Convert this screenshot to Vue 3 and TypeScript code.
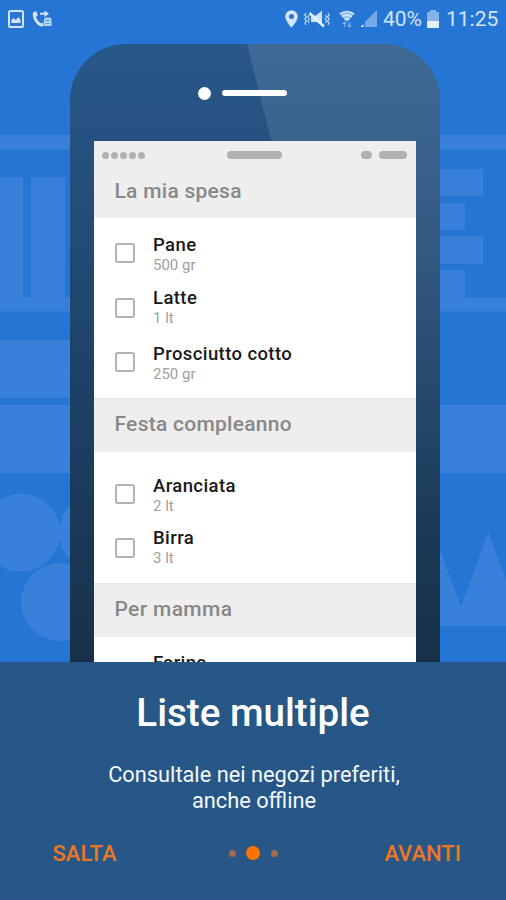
<script setup lang="ts">
interface Item {
  name: string
  amount?: string
  compact?: boolean
}

interface ShoppingList {
  title: string
  slug: string
  items: Item[]
}

const lists: ShoppingList[] = [
  {
    title: 'La mia spesa',
    slug: 'first',
    items: [
      { name: 'Pane', amount: '500 gr' },
      { name: 'Latte', amount: '1 lt', compact: true },
      { name: 'Prosciutto cotto', amount: '250 gr' },
    ],
  },
  {
    title: 'Festa compleanno',
    slug: 'second',
    items: [
      { name: 'Aranciata', amount: '2 lt' },
      { name: 'Birra', amount: '3 lt', compact: true },
    ],
  },
  {
    title: 'Per mamma',
    slug: 'third',
    items: [{ name: 'Farina' }],
  },
]
</script>

<template>
  <main class="app">
    <section class="hero">
      <svg class="backdrop" viewBox="0 0 506 662" aria-hidden="true">
        <g fill="#3880d9">
          <path d="M0 135h506v14.500H0z" />
          <path d="M0 177h23v120h8V177h34v120h5v14.500H0z" />
          <path d="M440 169h43.500v27H440zM440 203h25v27h-25zM440 236h43.500v28H440zM440 270h25v27.500h41v14h-66z" />
          <path d="M0 340h70v58H0zM0 405h506v68H0z" />
          <circle cx="21" cy="532.500" r="39" />
          <circle cx="98" cy="532.500" r="39" />
          <circle cx="60" cy="602" r="39" />
          <path d="M440 550l21 57 27.500-75L506 581v45h-66z" />
        </g>
      </svg>

      <header class="status">
        <div class="status-group">
          <svg class="ic-picture" width="16" height="18" viewBox="0 0 16 18">
            <rect x="1" y="1" width="14" height="16" rx="1.500" fill="none" stroke="#d3e4f9" stroke-width="2" />
            <path d="M3.500 13V10l2-2 2 2 3-3 2 3v3z" fill="#d3e4f9" />
          </svg>
          <svg class="ic-call" width="20" height="18" viewBox="0 0 20 18">
            <path d="M1 2.500L4 1l2 4-2 2c1 3 2.500 4.800 5.500 6.500l1.500-1v4C6 17.500-.5 9 1 2.500z" fill="#d3e4f9" />
            <path d="M8 3.700h6" stroke="#d3e4f9" stroke-width="2" />
            <path d="M12.500.5L17 3.700 12.500 7z" fill="#d3e4f9" />
            <path d="M12 9l1.500-1.500h5L19.500 9v7h-8z" fill="#b5d1f3" />
            <path d="M13.500 10.500h4M13.500 13.500h4" stroke="#5c98e0" stroke-width="1" />
          </svg>
        </div>
        <div class="status-group">
          <svg class="ic-pin" width="13" height="18" viewBox="0 0 13 18">
            <path fill-rule="evenodd" d="M6.500.3A6.200 6.200 0 0 0 .3 6.500C.3 11 6.500 17.700 6.500 17.700S12.700 11 12.700 6.500A6.200 6.200 0 0 0 6.500.3zm0 3.700a2.500 2.500 0 1 1 0 5 2.500 2.500 0 0 1 0-5z" fill="#d3e4f9" />
          </svg>
          <svg class="ic-mute" width="26" height="18" viewBox="0 0 26 18">
            <path d="M2 3L.8 5 2.500 7 .8 9l1.700 2-1.700 2L2 15M5 5L4 7l1.300 2L4 11l1 2M24 3l1.200 2-1.700 2 1.700 2-1.700 2 1.700 2-1.200 2M21.500 5l1 2-1.300 2 1.300 2-1 2" fill="none" stroke="#b9d3f4" stroke-width="1.200" />
            <path d="M7 5.500h5l6-5v15.500l-5-4H7z" fill="#cfe1f8" />
            <path d="M5.500 3l14.500 13.500" stroke="#e4effc" stroke-width="2.400" />
          </svg>
          <svg class="ic-wifi" width="16" height="18" viewBox="0 0 16 18">
            <path d="M1 4Q8-1.500 15 4L8 12z" fill="#8fb9ec" />
            <path d="M1 4Q8-1 15 4M3 6.800q5-3.500 10 0M5.500 9.500q2.500-1.700 5 0" fill="none" stroke="#d3e4f9" stroke-width="1.700" />
            <path d="M5.500 17v-5M3.800 14l1.700-2 1.700 2M10.500 12v5M8.800 15l1.700 2 1.700-2" fill="none" stroke="#76a9e8" stroke-width="1.300" />
          </svg>
          <svg class="ic-signal" width="18" height="17" viewBox="0 0 18 17">
            <path d="M17 0v17H5V12z" fill="#76a9e8" />
            <path d="M.5 17l3-3v3z" fill="#e4effc" />
          </svg>
          <span class="percent">40%</span>
          <svg class="ic-battery" width="12" height="18" viewBox="0 0 12 18">
            <path d="M3 0h6v2h3v16H0V2h3z" fill="#84b2eb" />
            <path d="M0 11h12v7H0z" fill="#e4effc" />
          </svg>
          <span class="clock">11:25</span>
        </div>
      </header>

      <div class="phone">
        <svg class="shine" viewBox="0 0 370 618" aria-hidden="true">
          <defs>
            <linearGradient id="shine" x1="0" y1="0" x2="0" y2="1">
              <stop offset="0" stop-color="#fff" stop-opacity=".11" />
              <stop offset=".35" stop-color="#fff" stop-opacity=".08" />
              <stop offset=".8" stop-color="#fff" stop-opacity="0" />
            </linearGradient>
          </defs>
          <path d="M177 0h193v618H332z" fill="url(#shine)" />
        </svg>
        <div class="earpiece">
          <span class="camera"></span>
          <span class="speaker"></span>
        </div>
        <div class="screen">
          <div class="mini-status">
            <div class="dots"><i v-for="n in 5" :key="n"></i></div>
            <i class="pill center"></i>
            <div class="right"><i class="pill small"></i><i class="pill medium"></i></div>
          </div>
          <section v-for="list in lists" :key="list.slug" class="list" :class="list.slug">
            <h2>{{ list.title }}</h2>
            <ul>
              <li v-for="item in list.items" :key="item.name" :class="{ compact: item.compact }">
                <span class="box"></span>
                <div class="text">
                  <span class="name">{{ item.name }}</span>
                  <span v-if="item.amount" class="amount">{{ item.amount }}</span>
                </div>
              </li>
            </ul>
          </section>
        </div>
      </div>
    </section>

    <section class="panel">
      <h1>Liste multiple</h1>
      <p>Consultale nei negozi preferiti,<br />anche offline</p>
      <nav>
        <button type="button" class="skip">SALTA</button>
        <div class="pager"><i></i><i class="active"></i><i></i></div>
        <button type="button" class="next">AVANTI</button>
      </nav>
    </section>
  </main>
</template>

<style>
body {
  margin: 0;
}
</style>

<style scoped>
.app {
  width: 506px;
  height: 900px;
  overflow: hidden;
  display: flex;
  flex-direction: column;
  font-family: Roboto, "Liberation Sans", sans-serif;
}
.hero {
  position: relative;
  height: 661.5px;
  flex: none;
  overflow: hidden;
  background: #2576d4;
}
.backdrop {
  position: absolute;
  inset: 0;
  width: 506px;
  height: 662px;
}
.status {
  position: relative;
  height: 37px;
  box-sizing: border-box;
  padding: 0 8px;
  display: flex;
  justify-content: space-between;
  color: #d3e4f9;
  font-size: 21px;
  line-height: 38px;
}
.status-group {
  display: flex;
  align-items: center;
}
.status svg {
  flex: none;
}
.ic-call {
  margin-left: 8px;
}
.ic-mute {
  margin-left: 6px;
}
.ic-wifi {
  margin-left: 9px;
}
.ic-signal {
  margin-left: 5px;
}
.percent {
  width: 39px;
  margin-left: 5px;
  letter-spacing: -0.100px;
}
.ic-battery {
  margin-left: 5px;
}
.clock {
  width: 52px;
  margin-left: 7px;
}
.phone {
  position: relative;
  width: 370px;
  height: 618px;
  margin: 6.500px auto 0 70px;
  border-radius: 56px 56px 0 0;
  overflow: hidden;
  background: linear-gradient(#285789 0, #25517f 110px, #1d4268 330px, #183149 618px);
}
.shine {
  position: absolute;
  left: 0;
  top: 0;
  width: 370px;
  height: 618px;
}
.earpiece {
  position: relative;
  height: 97.500px;
  box-sizing: border-box;
  padding: 2px 0 0 128px;
  display: flex;
  align-items: center;
  gap: 10.500px;
}
.camera {
  width: 13px;
  height: 13px;
  border-radius: 50%;
  background: #fff;
}
.speaker {
  width: 65px;
  height: 6px;
  border-radius: 3px;
  background: #fff;
}
.screen {
  position: relative;
  width: 322px;
  height: 521px;
  margin-left: 24px;
  overflow: hidden;
  background: #fff;
}
.mini-status {
  height: 28px;
  box-sizing: border-box;
  padding: 0 9.500px 0 8px;
  display: grid;
  grid-template-columns: 1fr 55px 1fr;
  align-items: center;
  background: #eee;
}
.dots {
  display: flex;
  gap: 2px;
}
.dots i {
  width: 7px;
  height: 7px;
  border-radius: 50%;
  background: #b1b1b1;
}
.pill {
  height: 7.500px;
  border-radius: 4px;
  background: #b1b1b1;
}
.right {
  display: flex;
  justify-content: flex-end;
  gap: 6.500px;
}
.small {
  width: 11px;
}
.medium {
  width: 28px;
}
h2 {
  margin: 0;
  height: 54px;
  box-sizing: border-box;
  padding-left: 20.500px;
  border-top: 1px solid #e6e6e6;
  background: #eee;
  color: #888;
  font-size: 21px;
  font-weight: 500;
  line-height: 50px;
  letter-spacing: 0.270px;
}
.third h2 {
  letter-spacing: 0.350px;
}
.first h2 {
  height: 49px;
  border-top: 0;
  line-height: 45px;
}
ul {
  list-style: none;
  margin: 0;
  padding: 8px 20.500px 8.500px;
}
.second ul {
  padding: 14.500px 20.500px 7.500px;
}
li {
  height: 54.500px;
  display: flex;
  align-items: center;
  gap: 18.500px;
}
.third ul {
  height: 26px;
  box-sizing: border-box;
  padding: 0 20.500px 0 59px;
  overflow: hidden;
}
.third li {
  height: auto;
  padding-top: 10.500px;
}
.third .box {
  display: none;
}
.box {
  width: 20px;
  height: 20px;
  box-sizing: border-box;
  border: 2px solid #b3b3b3;
  border-radius: 2.500px;
}
.text {
  padding-top: 6px;
  display: flex;
  flex-direction: column;
}
.compact .text {
  padding-top: 2.500px;
}
.second .compact .text {
  padding-top: 1.500px;
}
.name {
  color: #1a1a1a;
  font-size: 18.500px;
  font-weight: 500;
  line-height: 19px;
  letter-spacing: 0.400px;
}
.amount {
  color: #a0a0a0;
  font-size: 15px;
  line-height: 21px;
}
.panel {
  flex: 1;
  display: flex;
  flex-direction: column;
  align-items: center;
  background: #275787;
  color: #fff;
}
h1 {
  margin: 27.500px 0 0;
  font-size: 38.600px;
  font-weight: 500;
  line-height: 48px;
}
p {
  margin: 25px 0 0;
  padding-left: 2px;
  text-align: center;
  font-size: 21.800px;
  line-height: 26px;
  color: #f5f8fc;
}
nav {
  width: 100%;
  box-sizing: border-box;
  margin-top: 25px;
  padding: 0 45px 0 52.500px;
  display: grid;
  grid-template-columns: 176px 49px 1fr;
  align-items: center;
}
button {
  padding: 0;
  border: 0;
  background: none;
  color: #ee7623;
  font: 500 22px/30px Roboto, sans-serif;
}
.skip {
  justify-self: start;
}
.next {
  justify-self: end;
}
.pager {
  padding-bottom: 2px;
  display: flex;
  align-items: center;
  justify-content: space-between;
}
.pager i {
  width: 7px;
  height: 7px;
  border-radius: 50%;
  background: #a8694f;
}
.pager .active {
  width: 14px;
  height: 14px;
  background: #ff7300;
}
</style>
